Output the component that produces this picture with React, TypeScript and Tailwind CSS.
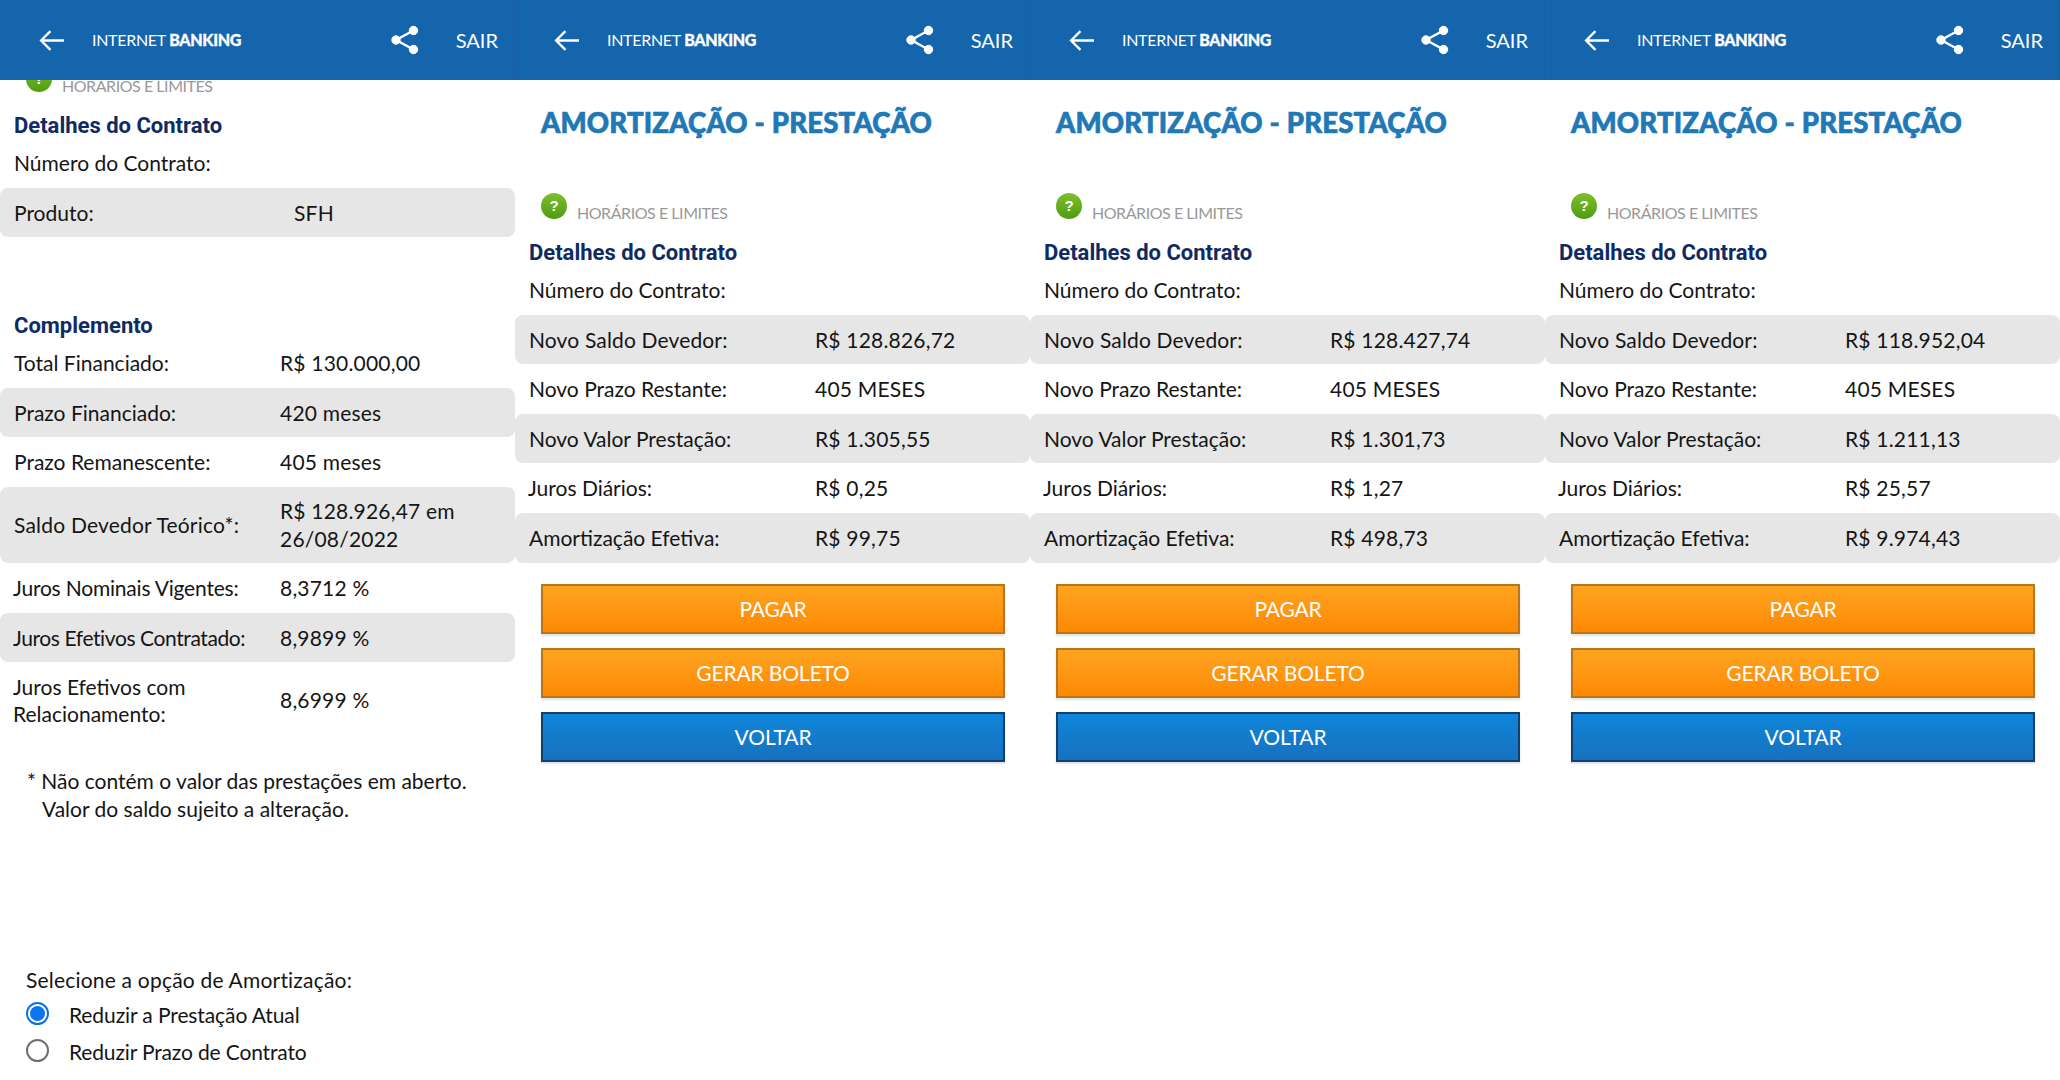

const body = "font-['Lato','Noto_Sans',sans-serif]";

function Header() {
  return (
    <header className={`relative z-10 flex h-20 shrink-0 items-center bg-[#1565ad] text-white border-r border-[#1a5f9f] ${body}`}>
      <svg viewBox="0 0 24 24" className="ml-[39px] h-[25px] w-[25px]" fill="none" stroke="currentColor" strokeWidth="2.2">
        <path d="M24 12H2M11 3l-9 9 9 9" />
      </svg>
      <span className="ml-[28px] text-[16px] tracking-[-0.3px]">
        <span className="font-normal">INTERNET </span>
        <span className="font-black [-webkit-text-stroke:0.3px_white]">BANKING</span>
      </span>
      <svg viewBox="0 0 28 30" className="ml-auto h-[30px] w-[28px]" fill="currentColor" stroke="currentColor">
        <circle cx="22.5" cy="5.5" r="4.2" />
        <circle cx="22.5" cy="24.5" r="4.2" />
        <circle cx="5" cy="15" r="4.2" />
        <path d="M22.5 5.5 5 15l17.5 9.5" fill="none" strokeWidth="2.4" />
      </svg>
      <span className="ml-[37px] mr-[16px] text-[20px] font-normal">SAIR</span>
    </header>
  );
}

function Help() {
  return (
    <div className={`flex h-[46px] items-start pl-[26px] ${body}`}>
      <span className="mt-px flex h-[26px] w-[26px] items-center justify-center rounded-full bg-gradient-to-b from-[#7fbf2c] to-[#4e9c10] font-['Liberation_Sans',sans-serif] text-[15px] font-bold text-white">
        ?
      </span>
      <span className="ml-[10px] mt-[11px] text-[16px] leading-[20px] tracking-[-0.45px] text-[#999999]">HORÁRIOS E LIMITES</span>
    </div>
  );
}

function Heading({ children, className = "" }: { children: string; className?: string }) {
  return (
    <h2 className={`h-[27px] pl-[14px] pt-[1px] font-['Roboto',sans-serif] text-[22px] font-bold leading-[27px] text-[#0f2b63] ${className}`}>
      {children}
    </h2>
  );
}

type RowProps = {
  label: React.ReactNode;
  value?: React.ReactNode;
  gray?: boolean;
  tall?: boolean;
  col?: string;
  nudge?: boolean;
};

function Row({ label, value, gray, tall, col = "w-[300px]", nudge }: RowProps) {
  return (
    <div
      className={`flex items-center rounded-[8px] text-[21px] leading-[27.5px] text-[#151515] ${body} ${tall ? "h-[76px]" : "h-[49.6px]"} ${gray ? "bg-[#e6e6e6]" : ""}`}
    >
      <div className={`shrink-0 pr-1 ${nudge ? "pl-[13px]" : "pl-[14px]"} ${col}`}>{label}</div>
      <div className="tracking-[0.2px]">{value}</div>
    </div>
  );
}

function ActionButton({ children, blue }: { children: string; blue?: boolean }) {
  return (
    <button
      className={`h-[50px] w-full border-2 text-[21px] tracking-[-0.15px] text-white shadow-[0_2px_2px_rgba(0,0,0,0.12)] ${body} ${
        blue
          ? "border-[#123f70] bg-gradient-to-b from-[#0e85da] to-[#1672bd]"
          : "border-[#b7761c] bg-gradient-to-b from-[#fda41f] to-[#fe8800]"
      }`}
    >
      {children}
    </button>
  );
}

function Amortizacao({ saldo, valor, juros, efetiva }: { saldo: string; valor: string; juros: string; efetiva: string }) {
  return (
    <section className="flex h-[1080px] w-[515px] flex-col overflow-hidden bg-white">
      <Header />
      <div className="pt-[23px]">
        <h1 className={`h-[40px] whitespace-nowrap pl-[26px] text-[27.5px] font-black leading-[40px] tracking-[0.2px] text-[#2178b6] [-webkit-text-stroke:0.7px_#2178b6] ${body}`}>
          AMORTIZAÇÃO - PRESTAÇÃO
        </h1>
        <div className="mt-[49px]">
          <Help />
        </div>
        <Heading>Detalhes do Contrato</Heading>
        <Row label="Número do Contrato:" />
        <Row gray label={<span className="tracking-[0.15px]">Novo Saldo Devedor:</span>} value={saldo} />
        <Row label="Novo Prazo Restante:" value="405 MESES" />
        <Row gray label="Novo Valor Prestação:" value={valor} />
        <Row nudge label="Juros Diários:" value={juros} />
        <Row gray label="Amortização Efetiva:" value={efetiva} />
        <div className="mx-[26px] mt-[21px] flex w-[464px] flex-col gap-[14px]">
          <ActionButton>PAGAR</ActionButton>
          <ActionButton>GERAR BOLETO</ActionButton>
          <ActionButton blue>VOLTAR</ActionButton>
        </div>
      </div>
    </section>
  );
}

function Detalhes() {
  const col = "w-[280px]";
  return (
    <section className="flex h-[1080px] w-[515px] flex-col overflow-hidden bg-white">
      <Header />
      <div className="-mt-[15px]">
        <Help />
        <Heading>Detalhes do Contrato</Heading>
        <Row col={col} label="Número do Contrato:" />
        <Row col="w-[294px]" gray label="Produto:" value="SFH" />
        <Heading className="mt-[74px]">Complemento</Heading>
        <Row col={col} label="Total Financiado:" value="R$ 130.000,00" />
        <Row col={col} gray label="Prazo Financiado:" value="420 meses" />
        <Row col={col} label="Prazo Remanescente:" value="405 meses" />
        <Row
          col={col}
          gray
          tall
          label={<span className="tracking-[0.2px]">Saldo Devedor Teórico*:</span>}
          value={
            <>
              R$ 128.926,47 em
              <br />
              26/08/2022
            </>
          }
        />
        <Row col={col} nudge label={<span className="tracking-[-0.2px]">Juros Nominais Vigentes:</span>} value="8,3712 %" />
        <Row col={col} nudge gray label={<span className="tracking-[-0.4px]">Juros Efetivos Contratado:</span>} value="8,9899 %" />
        <Row
          col={col}
          nudge
          tall
          label={
            <>
              Juros Efetivos com
              <br />
              Relacionamento:
            </>
          }
          value="8,6999 %"
        />
        <p className={`mt-[29px] pl-[27px] text-[21px] leading-[27.5px] text-[#151515] ${body}`}>
          * Não contém o valor das prestações em aberto.
          <br />
          <span className="pl-[15px]">Valor do saldo sujeito a alteração.</span>
        </p>
        <div className={`mt-[144px] pl-[26px] text-[21px] text-[#151515] ${body}`}>
          <p className="leading-[27px] tracking-[0.2px]">Selecione a opção de Amortização:</p>
          <label className="mt-[9px] flex h-[37px] items-start">
            <span className="flex h-[23px] w-[23px] items-center justify-center rounded-full border-2 border-[#0f6fe0]">
              <span className="h-[15px] w-[15px] rounded-full bg-[#0f74f0]" />
            </span>
            <span className="ml-[20px] mt-[-1px] leading-[27px] tracking-[-0.1px]">Reduzir a Prestação Atual</span>
          </label>
          <label className="flex h-[37px] items-start">
            <span className="h-[23px] w-[23px] rounded-full border-2 border-[#6f6f6f]" />
            <span className="ml-[20px] mt-[-1px] leading-[27px] tracking-[-0.15px]">Reduzir Prazo de Contrato</span>
          </label>
        </div>
      </div>
    </section>
  );
}

export default function App() {
  return (
    <main className="flex h-[1080px] w-[2060px] overflow-hidden bg-white">
      <Detalhes />
      <Amortizacao saldo="R$ 128.826,72" valor="R$ 1.305,55" juros="R$ 0,25" efetiva="R$ 99,75" />
      <Amortizacao saldo="R$ 128.427,74" valor="R$ 1.301,73" juros="R$ 1,27" efetiva="R$ 498,73" />
      <Amortizacao saldo="R$ 118.952,04" valor="R$ 1.211,13" juros="R$ 25,57" efetiva="R$ 9.974,43" />
    </main>
  );
}
